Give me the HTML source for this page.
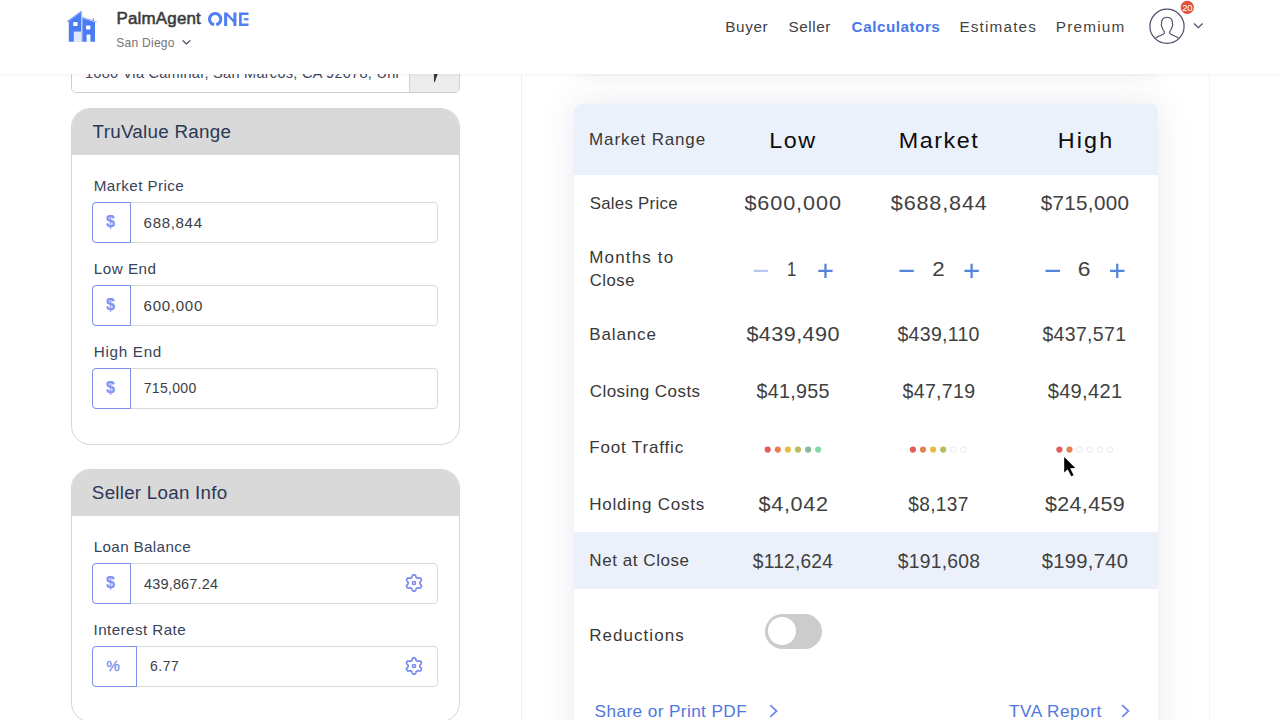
<!DOCTYPE html>
<html><head><meta charset="utf-8">
<style>
*{box-sizing:border-box;margin:0;padding:0}
html,body{width:1280px;height:720px;overflow:hidden;background:#fff;font-family:"Liberation Sans",sans-serif;}
.abs{position:absolute}
#hdr{position:absolute;left:0;top:0;width:1280px;height:73.6px;background:#fff;box-shadow:0 1px 3px rgba(0,0,0,.05);z-index:10}
.t{position:absolute;white-space:nowrap;line-height:1;transform-origin:0 50%}
.nav{color:#424242}
.navb{font-weight:bold;color:#4a78e8}
.pa{color:#3a3a3a;-webkit-text-stroke:.55px #3a3a3a}
.one{font-weight:bold;color:#4a7cf0}
.sd{color:#757575}
.card{position:absolute;left:71px;width:389px;border:1px solid #d6d6d6;border-radius:19px;background:#fff;overflow:hidden}
.card .ch{height:46px;background:#d9d9d9}
.ctitle{color:#2b3856}
.lbl{color:#38435c}
.ig{position:absolute;left:92px;width:346.2px;height:41px;border:1px solid #dadada;border-radius:4px;background:#fff}
.pf{position:absolute;left:-1px;top:-1px;height:41px;border:1.5px solid #7a8feb;border-radius:4px 0 0 4px;background:#fff}
.iv{color:#3d3d45}
.rl{color:#383838}
.v{color:#404040}
.hh{color:#0c0c0c}
.dot{position:absolute;width:6.4px;height:6.4px;border-radius:50%;top:446.4px}
.dot.e{background:#fff;border:1px solid #e4e4e4}
.lnk{color:#5078dc}
</style></head><body>

<!-- address input (cut by header) -->
<div class="abs" style="left:71px;top:50px;width:389px;height:43px;border:1px solid #d0d0d0;border-radius:5px;background:#fff;overflow:hidden">
  <div class="abs" style="left:337px;top:0;width:52px;height:43px;background:#ececec;border-left:1px solid #d0d0d0"></div>
</div>
<div class="t" style="left:85px;top:66.2px;font-size:14.5px;color:#3f4560;letter-spacing:.28px">1680 Via Caminar, San Marcos, CA 92078, Uni</div>
<svg class="abs" style="left:430px;top:68px" width="12" height="16" viewBox="430 68 12 16"><path d="M433.8 70L439.2 70L434.9 82.1L434 82.1Z" fill="#3a3a3a"/></svg>

<!-- Card 1 -->
<div class="card" style="top:108px;height:336.5px"><div class="ch"></div></div>
<div class="ig" style="top:202px"><div class="pf" style="width:39.3px"></div></div>
<div class="ig" style="top:285px"><div class="pf" style="width:39.3px"></div></div>
<div class="ig" style="top:368px"><div class="pf" style="width:39.3px"></div></div>

<!-- Card 2 -->
<div class="card" style="top:469px;height:253px"><div class="ch"></div></div>
<div class="ig" style="top:563px"><div class="pf" style="width:39.3px"></div></div>
<div class="ig" style="top:646px"><div class="pf" style="width:45.3px"></div></div>

<!-- $ and % prefixes -->
<div class="t" style="left:106.2px;top:214px;font-size:16px;font-weight:bold;color:#8094f1;-webkit-text-stroke:.25px #8094f1;transform:translate(-.1px,.4px)">$</div>
<div class="t" style="left:106.2px;top:297px;font-size:16px;font-weight:bold;color:#8094f1;-webkit-text-stroke:.25px #8094f1;transform:translate(-.1px,.4px)">$</div>
<div class="t" style="left:106.2px;top:380px;font-size:16px;font-weight:bold;color:#8094f1;-webkit-text-stroke:.25px #8094f1;transform:translate(-.1px,.4px)">$</div>
<div class="t" style="left:106.2px;top:575px;font-size:16px;font-weight:bold;color:#8094f1;-webkit-text-stroke:.25px #8094f1;transform:translate(-.1px,.4px)">$</div>
<div class="t" style="left:106.3px;top:658px;font-size:15.3px;color:#7a90f0;-webkit-text-stroke:.35px #7a90f0">%</div>

<!-- gears -->
<svg class="abs" style="left:403px;top:572.4px" width="22" height="22" viewBox="-11 -11 22 22"><g fill="none" stroke="#7588ef" stroke-width="1.7" stroke-linejoin="round"><path d="M0.00 -8.10L0.35 -8.09L0.71 -8.07L1.06 -8.03L1.36 -7.71L1.61 -7.25L1.81 -6.76L1.98 -6.27L2.11 -5.80L2.26 -5.45L2.49 -5.35L2.72 -5.23L2.95 -5.11L3.17 -4.98L3.38 -4.83L3.59 -4.68L3.97 -4.73L4.44 -4.85L4.95 -4.95L5.48 -5.02L5.99 -5.03L6.43 -4.93L6.64 -4.65L6.83 -4.35L7.01 -4.05L7.18 -3.74L7.34 -3.42L7.48 -3.10L7.35 -2.68L7.08 -2.23L6.76 -1.81L6.42 -1.42L6.08 -1.07L5.85 -0.77L5.88 -0.51L5.89 -0.26L5.90 -0.00L5.89 0.26L5.88 0.51L5.85 0.77L6.08 1.07L6.42 1.42L6.76 1.81L7.08 2.23L7.35 2.68L7.48 3.10L7.34 3.42L7.18 3.74L7.01 4.05L6.83 4.35L6.64 4.65L6.43 4.93L5.99 5.03L5.48 5.02L4.95 4.95L4.44 4.85L3.97 4.73L3.59 4.68L3.38 4.83L3.17 4.98L2.95 5.11L2.72 5.23L2.49 5.35L2.26 5.45L2.11 5.80L1.98 6.27L1.81 6.76L1.61 7.25L1.36 7.71L1.06 8.03L0.71 8.07L0.35 8.09L0.00 8.10L-0.35 8.09L-0.71 8.07L-1.06 8.03L-1.36 7.71L-1.61 7.25L-1.81 6.76L-1.98 6.27L-2.11 5.80L-2.26 5.45L-2.49 5.35L-2.72 5.23L-2.95 5.11L-3.17 4.98L-3.38 4.83L-3.59 4.68L-3.97 4.73L-4.44 4.85L-4.95 4.95L-5.48 5.02L-5.99 5.03L-6.43 4.93L-6.64 4.65L-6.83 4.35L-7.01 4.05L-7.18 3.74L-7.34 3.42L-7.48 3.10L-7.35 2.68L-7.08 2.23L-6.76 1.81L-6.42 1.42L-6.08 1.07L-5.85 0.77L-5.88 0.51L-5.89 0.26L-5.90 0.00L-5.89 -0.26L-5.88 -0.51L-5.85 -0.77L-6.08 -1.07L-6.42 -1.42L-6.76 -1.81L-7.08 -2.23L-7.35 -2.68L-7.48 -3.10L-7.34 -3.42L-7.18 -3.74L-7.01 -4.05L-6.83 -4.35L-6.64 -4.65L-6.43 -4.93L-5.99 -5.03L-5.48 -5.02L-4.95 -4.95L-4.44 -4.85L-3.97 -4.73L-3.59 -4.68L-3.38 -4.83L-3.17 -4.98L-2.95 -5.11L-2.72 -5.23L-2.49 -5.35L-2.26 -5.45L-2.11 -5.80L-1.98 -6.27L-1.81 -6.76L-1.61 -7.25L-1.36 -7.71L-1.06 -8.03L-0.71 -8.07L-0.35 -8.09Z"/><circle r="1.6" stroke-width="1.5"/></g></svg>
<svg class="abs" style="left:403px;top:655.3px" width="22" height="22" viewBox="-11 -11 22 22"><g fill="none" stroke="#7588ef" stroke-width="1.7" stroke-linejoin="round"><path d="M0.00 -8.10L0.35 -8.09L0.71 -8.07L1.06 -8.03L1.36 -7.71L1.61 -7.25L1.81 -6.76L1.98 -6.27L2.11 -5.80L2.26 -5.45L2.49 -5.35L2.72 -5.23L2.95 -5.11L3.17 -4.98L3.38 -4.83L3.59 -4.68L3.97 -4.73L4.44 -4.85L4.95 -4.95L5.48 -5.02L5.99 -5.03L6.43 -4.93L6.64 -4.65L6.83 -4.35L7.01 -4.05L7.18 -3.74L7.34 -3.42L7.48 -3.10L7.35 -2.68L7.08 -2.23L6.76 -1.81L6.42 -1.42L6.08 -1.07L5.85 -0.77L5.88 -0.51L5.89 -0.26L5.90 -0.00L5.89 0.26L5.88 0.51L5.85 0.77L6.08 1.07L6.42 1.42L6.76 1.81L7.08 2.23L7.35 2.68L7.48 3.10L7.34 3.42L7.18 3.74L7.01 4.05L6.83 4.35L6.64 4.65L6.43 4.93L5.99 5.03L5.48 5.02L4.95 4.95L4.44 4.85L3.97 4.73L3.59 4.68L3.38 4.83L3.17 4.98L2.95 5.11L2.72 5.23L2.49 5.35L2.26 5.45L2.11 5.80L1.98 6.27L1.81 6.76L1.61 7.25L1.36 7.71L1.06 8.03L0.71 8.07L0.35 8.09L0.00 8.10L-0.35 8.09L-0.71 8.07L-1.06 8.03L-1.36 7.71L-1.61 7.25L-1.81 6.76L-1.98 6.27L-2.11 5.80L-2.26 5.45L-2.49 5.35L-2.72 5.23L-2.95 5.11L-3.17 4.98L-3.38 4.83L-3.59 4.68L-3.97 4.73L-4.44 4.85L-4.95 4.95L-5.48 5.02L-5.99 5.03L-6.43 4.93L-6.64 4.65L-6.83 4.35L-7.01 4.05L-7.18 3.74L-7.34 3.42L-7.48 3.10L-7.35 2.68L-7.08 2.23L-6.76 1.81L-6.42 1.42L-6.08 1.07L-5.85 0.77L-5.88 0.51L-5.89 0.26L-5.90 0.00L-5.89 -0.26L-5.88 -0.51L-5.85 -0.77L-6.08 -1.07L-6.42 -1.42L-6.76 -1.81L-7.08 -2.23L-7.35 -2.68L-7.48 -3.10L-7.34 -3.42L-7.18 -3.74L-7.01 -4.05L-6.83 -4.35L-6.64 -4.65L-6.43 -4.93L-5.99 -5.03L-5.48 -5.02L-4.95 -4.95L-4.44 -4.85L-3.97 -4.73L-3.59 -4.68L-3.38 -4.83L-3.17 -4.98L-2.95 -5.11L-2.72 -5.23L-2.49 -5.35L-2.26 -5.45L-2.11 -5.80L-1.98 -6.27L-1.81 -6.76L-1.61 -7.25L-1.36 -7.71L-1.06 -8.03L-0.71 -8.07L-0.35 -8.09Z"/><circle r="1.6" stroke-width="1.5"/></g></svg>

<!-- right panel borders -->
<div class="abs" style="left:521px;top:73px;width:1px;height:647px;background:#f0f0f0"></div>
<div class="abs" style="left:1209px;top:73px;width:1px;height:647px;background:#f3f3f3"></div>
<!-- card above (shadow only) -->
<div class="abs" style="left:574px;top:20px;width:584px;height:50px;background:#fff;box-shadow:0 4px 16px rgba(60,70,110,.10)"></div>

<!-- table -->
<div class="abs" style="left:574px;top:104px;width:583.5px;height:700px;background:#fff;border-radius:7px 7px 0 0;box-shadow:0 0 34px rgba(60,70,110,.115)"></div>
<div class="abs" style="left:574px;top:104px;width:583.5px;height:71px;background:#ebf1fb;border-radius:7px 7px 0 0"></div>
<div class="abs" style="left:574px;top:532.4px;width:583.5px;height:56.2px;background:#ebf0fa"></div>

<!-- +/- steppers -->
<svg class="abs" style="left:740px;top:255px" width="400" height="32" viewBox="740 255 400 32" fill="none" stroke-width="2.25">
 <path d="M753.8 270.9H768" stroke="#b9c8f0"/>
 <path d="M818.3 270.9H832.6M825.45 263.8V278" stroke="#5383dc" />
 <path d="M899.5 270.9H913.8" stroke="#5383dc" />
 <path d="M964.4 270.9H978.8M971.6 263.8V278" stroke="#5383dc" />
 <path d="M1045.5 270.9H1060" stroke="#5383dc" />
 <path d="M1110 270.9H1124.5M1117.25 263.8V278" stroke="#5383dc" />
</svg>

<!-- foot traffic dots -->
<svg class="abs" style="left:750px;top:440px" width="380" height="20" viewBox="750 440 380 20"><circle cx="767.7" cy="449.6" r="3.1" fill="#e15c5c"/><circle cx="777.8" cy="449.6" r="3.1" fill="#e58250"/><circle cx="787.9" cy="449.6" r="3.1" fill="#e8bd45"/><circle cx="798.0" cy="449.6" r="3.1" fill="#b7bd5c"/><circle cx="808.1" cy="449.6" r="3.1" fill="#86b69b"/><circle cx="818.2" cy="449.6" r="3.1" fill="#7edba6"/><circle cx="912.9" cy="449.6" r="3.1" fill="#e15c5c"/><circle cx="923.0" cy="449.6" r="3.1" fill="#e58250"/><circle cx="933.1" cy="449.6" r="3.1" fill="#e8bd45"/><circle cx="943.2" cy="449.6" r="3.1" fill="#b7bd5c"/><circle cx="953.3" cy="449.6" r="2.75" fill="#fff" stroke="#e3e3e3" stroke-width=".8"/><circle cx="963.4" cy="449.6" r="2.75" fill="#fff" stroke="#e3e3e3" stroke-width=".8"/><circle cx="1059.4" cy="449.6" r="3.1" fill="#e15c5c"/><circle cx="1069.5" cy="449.6" r="3.1" fill="#e58250"/><circle cx="1079.6" cy="449.6" r="2.75" fill="#fff" stroke="#e3e3e3" stroke-width=".8"/><circle cx="1089.7" cy="449.6" r="2.75" fill="#fff" stroke="#e3e3e3" stroke-width=".8"/><circle cx="1099.8" cy="449.6" r="2.75" fill="#fff" stroke="#e3e3e3" stroke-width=".8"/><circle cx="1109.9" cy="449.6" r="2.75" fill="#fff" stroke="#e3e3e3" stroke-width=".8"/></svg>

<!-- toggle -->
<div class="abs" style="left:765.3px;top:613.6px;width:56.7px;height:35.3px;border-radius:18px;background:#ccc"></div>
<div class="abs" style="left:768.1px;top:617.2px;width:28px;height:28px;border-radius:50%;background:#fff"></div>

<!-- link chevrons -->
<svg class="abs" style="left:765px;top:700px" width="20" height="22" viewBox="765 700 20 22"><path d="M770.3 705.2L776.6 711L770.3 716.8" fill="none" stroke="#6f86ee" stroke-width="1.7"/></svg>
<svg class="abs" style="left:1117px;top:700px" width="20" height="22" viewBox="1117 700 20 22"><path d="M1122.2 705.2L1128.5 711L1122.2 716.8" fill="none" stroke="#6f86ee" stroke-width="1.7"/></svg>

<div class="t ctitle" style="left:92px;top:123px;font-size:18.0px;letter-spacing:0.240px;transform:translate(0.60px,0.00px) scaleX(1.046)">TruValue Range</div>
<div class="t lbl" style="left:93px;top:179px;font-size:14.5px;letter-spacing:0.399px;transform:translate(0.75px,0.25px) scaleX(1.05)">Market Price</div>
<div class="t iv" style="left:143px;top:215px;font-size:14.5px;letter-spacing:0.628px;transform:translate(0.60px,0.50px) scaleX(1.04)">688,844</div>
<div class="t lbl" style="left:93px;top:262px;font-size:14.5px;letter-spacing:0.482px;transform:translate(0.75px,0.00px) scaleX(1.05)">Low End</div>
<div class="t iv" style="left:143px;top:298px;font-size:14.5px;letter-spacing:0.670px;transform:translate(0.60px,0.50px) scaleX(1.04)">600,000</div>
<div class="t lbl" style="left:93px;top:344px;font-size:14.5px;letter-spacing:0.669px;transform:translate(0.75px,0.75px) scaleX(1.05)">High End</div>
<div class="t iv" style="left:143px;top:381px;font-size:14.5px;letter-spacing:0.306px;transform:translate(0.66px,0.25px) scaleX(0.969)">715,000</div>
<div class="t ctitle" style="left:91px;top:483px;font-size:18.0px;letter-spacing:0.246px;transform:translate(0.87px,0.75px) scaleX(1.042)">Seller Loan Info</div>
<div class="t lbl" style="left:93px;top:540px;font-size:14.5px;letter-spacing:0.326px;transform:translate(0.75px,0.25px) scaleX(1.05)">Loan Balance</div>
<div class="t iv" style="left:144px;top:576px;font-size:14.5px;letter-spacing:0.186px;transform:translate(0.06px,0.50px) scaleX(0.995)">439,867.24</div>
<div class="t lbl" style="left:93px;top:622px;font-size:14.5px;letter-spacing:0.390px;transform:translate(0.57px,0.75px) scaleX(1.05)">Interest Rate</div>
<div class="t iv" style="left:149px;top:659px;font-size:14.5px;letter-spacing:0.579px;transform:translate(0.91px,0.25px) scaleX(0.962)">6.77</div>
<div class="t rl" style="left:589px;top:131px;font-size:16.2px;letter-spacing:0.801px;transform:translate(0.10px,0.00px) scaleX(1.05)">Market Range</div>
<div class="t hh" style="left:769px;top:129px;font-size:21.8px;letter-spacing:1.419px;transform:translate(0.33px,0.50px) scaleX(1.07)">Low</div>
<div class="t hh" style="left:898px;top:129px;font-size:21.8px;letter-spacing:1.432px;transform:translate(0.74px,0.50px) scaleX(1.07)">Market</div>
<div class="t hh" style="left:1057px;top:129px;font-size:21.8px;letter-spacing:2.035px;transform:translate(0.74px,0.50px) scaleX(1.07)">High</div>
<div class="t rl" style="left:589px;top:194px;font-size:16.2px;letter-spacing:0.263px;transform:translate(0.70px,0.75px) scaleX(1.039)">Sales Price</div>
<div class="t v" style="left:744px;top:193px;font-size:20.8px;letter-spacing:0.870px;transform:translate(0.38px,0.00px) scaleX(1.04)">$600,000</div>
<div class="t v" style="left:890px;top:193px;font-size:20.8px;letter-spacing:0.806px;transform:translate(0.76px,0.00px) scaleX(1.04)">$688,844</div>
<div class="t v" style="left:1040px;top:193px;font-size:20.8px;letter-spacing:0.296px;transform:translate(0.79px,0.00px) scaleX(0.992)">$715,000</div>
<div class="t rl" style="left:589px;top:248px;font-size:16.2px;letter-spacing:1.098px;transform:translate(0.26px,0.50px) scaleX(1.05)">Months to</div>
<div class="t rl" style="left:589px;top:272px;font-size:16.2px;letter-spacing:0.491px;transform:translate(0.77px,0.25px) scaleX(1.03)">Close</div>
<div class="t v" style="left:787px;top:259px;font-size:20.8px;transform:translate(0.12px,0.25px) scaleX(0.8)">1</div>
<div class="t v" style="left:932px;top:259px;font-size:20.8px;transform:translate(0.18px,0.25px) scaleX(1.075)">2</div>
<div class="t v" style="left:1077px;top:259px;font-size:20.8px;transform:translate(0.84px,0.25px) scaleX(1.1)">6</div>
<div class="t rl" style="left:589px;top:326px;font-size:16.2px;letter-spacing:0.821px;transform:translate(0.26px,0.00px) scaleX(1.05)">Balance</div>
<div class="t v" style="left:746px;top:324px;font-size:20.8px;letter-spacing:0.400px;transform:translate(0.38px,0.25px) scaleX(1.04)">$439,490</div>
<div class="t v" style="left:897px;top:324px;font-size:20.8px;letter-spacing:0.305px;transform:translate(0.46px,0.25px) scaleX(0.939)">$439,110</div>
<div class="t v" style="left:1042px;top:324px;font-size:20.8px;letter-spacing:0.347px;transform:translate(0.46px,0.25px) scaleX(0.937)">$437,571</div>
<div class="t rl" style="left:589px;top:382px;font-size:16.2px;letter-spacing:0.441px;transform:translate(0.67px,0.75px) scaleX(1.05)">Closing Costs</div>
<div class="t v" style="left:756px;top:381px;font-size:20.8px;letter-spacing:0.340px;transform:translate(0.45px,0.00px) scaleX(0.947)">$41,955</div>
<div class="t v" style="left:902px;top:381px;font-size:20.8px;letter-spacing:0.362px;transform:translate(0.46px,0.00px) scaleX(0.94)">$47,719</div>
<div class="t v" style="left:1047px;top:381px;font-size:20.8px;letter-spacing:0.306px;transform:translate(0.65px,0.00px) scaleX(0.967)">$49,421</div>
<div class="t rl" style="left:589px;top:439px;font-size:16.2px;letter-spacing:0.796px;transform:translate(0.26px,0.00px) scaleX(1.05)">Foot Traffic</div>
<div class="t rl" style="left:589px;top:495px;font-size:16.2px;letter-spacing:0.738px;transform:translate(0.26px,0.50px) scaleX(1.05)">Holding Costs</div>
<div class="t v" style="left:758px;top:494px;font-size:20.8px;letter-spacing:0.693px;transform:translate(0.39px,0.25px) scaleX(1.04)">$4,042</div>
<div class="t v" style="left:908px;top:494px;font-size:20.8px;letter-spacing:0.412px;transform:translate(0.20px,0.25px) scaleX(0.917)">$8,137</div>
<div class="t v" style="left:1044px;top:494px;font-size:20.8px;letter-spacing:0.314px;transform:translate(1.00px,0.25px) scaleX(1.034)">$24,459</div>
<div class="t rl" style="left:589px;top:552px;font-size:16.2px;letter-spacing:0.540px;transform:translate(0.29px,0.25px) scaleX(1.05)">Net at Close</div>
<div class="t v" style="left:752px;top:550px;font-size:20.8px;letter-spacing:0.262px;transform:translate(0.76px,0.50px) scaleX(0.921)">$112,624</div>
<div class="t v" style="left:897px;top:550px;font-size:20.8px;letter-spacing:0.284px;transform:translate(0.66px,0.50px) scaleX(0.928)">$191,608</div>
<div class="t v" style="left:1041px;top:550px;font-size:20.8px;letter-spacing:0.298px;transform:translate(0.66px,0.50px) scaleX(0.971)">$199,740</div>
<div class="t rl" style="left:589px;top:626px;font-size:16.2px;letter-spacing:0.988px;transform:translate(0.26px,0.75px) scaleX(1.05)">Reductions</div>
<div class="t lnk" style="left:594px;top:702px;font-size:16.4px;letter-spacing:0.374px;transform:translate(0.62px,0.75px) scaleX(1.05)">Share or Print PDF</div>
<div class="t lnk" style="left:1008px;top:702px;font-size:16.4px;letter-spacing:0.479px;transform:translate(1.00px,0.75px) scaleX(1.05)">TVA Report</div>


<!-- cursor -->
<svg class="abs" style="left:1060px;top:454px;z-index:20" width="20" height="26" viewBox="1060 454 20 26"><path d="M1064.2 457 L1064.2 472.4 L1067.6 469.2 L1071.3 476.3 L1073.6 475.2 L1070.1 468.2 L1075.2 467.9 Z" fill="#000"/></svg>

<!-- header -->
<div id="hdr">
<!-- logo -->
<svg class="abs" style="left:64px;top:8px" width="36" height="38" viewBox="64 8 36 38">
 <g fill="#4a7cf4">
  <path d="M68.8 41.8V21.2L81.2 12.2V41.8Z"/>
  <path d="M82.3 41.8V18.0L95 22.2V41.8Z"/>
 </g>
 <path d="M67.3 21.8L81.6 11.3" stroke="#6f98f7" stroke-width="1.2" fill="none"/>
 <path d="M82 17.2L96.6 21.9" stroke="#8fb0f9" stroke-width="1.1" fill="none"/>
 <path d="M93.3 18.2V21" stroke="#5b84ee" stroke-width="1"/>
 <rect x="73.2" y="22.1" width="4.4" height="3.9" rx=".8" fill="#fff"/>
 <rect x="86" y="25.5" width="4.4" height="4.1" rx=".8" fill="#fff"/>
 <rect x="73.8" y="31.6" width="7.4" height="10.3" fill="#e6edfd"/>
 <path d="M74.5 33.5H80.5M74.5 35.3H80.5M74.5 37.1H80.5M74.5 38.9H80.5" stroke="#c9d6fa" stroke-width=".6"/>
 <rect x="86.6" y="34.6" width="3.8" height="7.3" fill="#fff"/>
 <path d="M81.7 12V41.8" stroke="#a9c0fb" stroke-width=".9"/>
</svg>
<!-- san diego chevron -->
<svg class="abs" style="left:180px;top:36px" width="14" height="12" viewBox="180 36 14 12"><path d="M182.5 40.3L186.4 44L190.3 40.3" fill="none" stroke="#3c3c58" stroke-width="1.15"/></svg>
<!-- avatar -->
<svg class="abs" style="left:1145px;top:0" width="70" height="50" viewBox="1145 0 70 50">
 <circle cx="1167" cy="26.3" r="17.1" fill="#fff" stroke="#4a4e6a" stroke-width="1.2"/>
 <path d="M1155.5 38.2 C1158 36.2 1162.5 35.2 1164.2 33.4 C1164.6 32.6 1164.4 31.6 1163.8 30.8 C1162.6 29.6 1162.2 28.2 1162 26.8 C1161.2 26.2 1161 24.6 1161.6 23.8 C1161.2 19.6 1163.4 17.2 1167 17.2 C1170.6 17.2 1172.8 19.6 1172.4 23.8 C1173 24.6 1172.8 26.2 1172 26.8 C1171.8 28.2 1171.4 29.6 1170.2 30.8 C1169.6 31.6 1169.4 32.6 1169.8 33.4 C1171.5 35.2 1176 36.2 1178.5 38.2" fill="none" stroke="#4a4e6a" stroke-width="1.1"/>
 <circle cx="1187.3" cy="7.3" r="6.6" fill="#e0523a"/>
 <text x="1187.3" y="10.6" font-family="Liberation Sans" font-size="9.5" fill="#fff" text-anchor="middle" letter-spacing="-.3">20</text>
 <path d="M1194 23.5L1198.3 27.6L1202.6 23.5" fill="none" stroke="#4a4e6a" stroke-width="1.2"/>
</svg>
<svg class="abs" style="left:205px;top:9px" width="48" height="20" viewBox="205 9 48 20">
 <path d="M216.2 24.65A5.6 5.6 0 1 0 214.1 24.65" fill="none" stroke="#4f7ef5" stroke-width="3"/>
 <path d="M224.1 25.9V12.6H227.0L233.4 19.3V12.6H236.4V25.9H233.4V22.6L227.2 16.1V25.9Z" fill="#4f7ef5"/>
 <path d="M239.1 12.6H248.5V14.9H241.7V23.6H248.5V25.9H239.1Z" fill="#4f7ef5"/>
 <rect x="243.8" y="18.2" width="4.7" height="2.1" fill="#4f7ef5"/>
</svg>
<div class="t pa" style="left:116px;top:9px;font-size:17.0px;letter-spacing:0.189px;transform:translate(0.41px,0.60px) scaleX(0.997)">PalmAgent</div>
<div class="t sd" style="left:116px;top:36px;font-size:12.7px;letter-spacing:0.277px;transform:translate(0.34px,0.70px) scaleX(0.945)">San Diego</div>
<div class="t nav" style="left:725px;top:18px;font-size:15.3px;letter-spacing:0.633px;transform:translate(0.19px,0.50px) scaleX(1.0)">Buyer</div>
<div class="t nav" style="left:788px;top:18px;font-size:15.3px;letter-spacing:0.550px;transform:translate(0.43px,0.50px) scaleX(1.0)">Seller</div>
<div class="t nav navb" style="left:851px;top:18px;font-size:15.3px;letter-spacing:0.493px;transform:translate(0.60px,0.50px) scaleX(1.0)">Calculators</div>
<div class="t nav" style="left:959px;top:18px;font-size:15.3px;letter-spacing:1.166px;transform:translate(0.42px,0.50px) scaleX(1.0)">Estimates</div>
<div class="t nav" style="left:1055px;top:18px;font-size:15.3px;letter-spacing:1.184px;transform:translate(0.85px,0.50px) scaleX(1.0)">Premium</div>

</div>
</body></html>
